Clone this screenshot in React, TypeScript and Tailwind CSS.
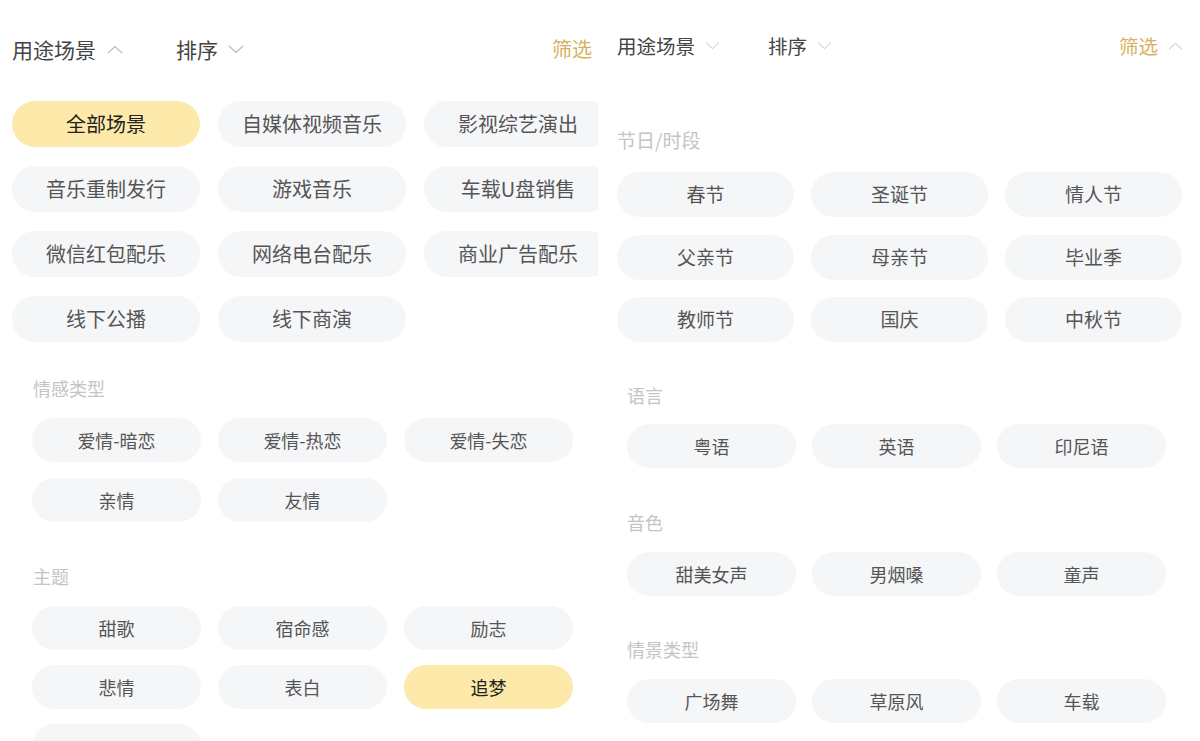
import React from "react";

const font = { fontFamily: '"Noto Sans CJK SC", "Noto Sans", sans-serif' };

function Chevron({ up, className }: { up?: boolean; className?: string }) {
  return (
    <svg viewBox="0 0 16 9" className={className} fill="none" stroke="currentColor" strokeWidth="1.1" strokeLinecap="round" strokeLinejoin="round">
      {up ? <polyline points="1,8 8,1.5 15,8" /> : <polyline points="1,1 8,7.5 15,1" />}
    </svg>
  );
}

function Chip({ label, active, cls }: { label: string; active?: boolean; cls: string }) {
  return (
    <div
      className={`flex items-center justify-center rounded-full whitespace-nowrap ${cls} ${
        active ? "bg-[#fde9a9] text-[#222]" : "bg-[#f5f6f8] text-[#555]"
      }`}
    >
      {label}
    </div>
  );
}

function Label({ text, cls }: { text: string; cls: string }) {
  return <div className={`text-[#c4c4c4] leading-[24px] ${cls}`}>{text}</div>;
}

export default function App() {
  const top = ["全部场景", "自媒体视频音乐", "影视综艺演出", "音乐重制发行", "游戏音乐", "车载U盘销售", "微信红包配乐", "网络电台配乐", "商业广告配乐", "线下公播", "线下商演"];
  const emo = ["爱情-暗恋", "爱情-热恋", "爱情-失恋", "亲情", "友情"];
  const theme = ["甜歌", "宿命感", "励志", "悲情", "表白", "追梦", ""];
  const fest = ["春节", "圣诞节", "情人节", "父亲节", "母亲节", "毕业季", "教师节", "国庆", "中秋节"];
  const lang = ["粤语", "英语", "印尼语"];
  const tone = ["甜美女声", "男烟嗓", "童声"];
  const scene = ["广场舞", "草原风", "车载"];

  return (
    <div className="w-[1200px] h-[741px] overflow-hidden bg-white flex" style={font}>
      {/* Left panel */}
      <div className="w-[598px] h-full overflow-hidden shrink-0 flex flex-col">
        <div className="pt-[36px] pl-[12px] pr-[6px] flex items-center text-[21px] leading-[26px] text-[#444]">
          <div className="flex items-center w-[164px]">
            <span>用途场景</span>
            <Chevron up className="w-[16px] h-[9px] ml-[11px] text-[#bdbdbd]" />
          </div>
          <div className="flex items-center">
            <span>排序</span>
            <Chevron className="w-[16px] h-[9px] ml-[10px] text-[#bdbdbd]" />
          </div>
          <span className="ml-auto text-[#d6b25e] text-[20px]">筛选</span>
        </div>
        <div className="mt-[39px] pl-[12px] grid grid-cols-[188px_188px_188px] gap-x-[18px] gap-y-[19px] w-[620px]">
          {top.map((t, i) => (
            <Chip key={t} label={t} active={i === 0} cls="h-[46px] text-[20px]" />
          ))}
        </div>
        <Label text="情感类型" cls="mt-[34px] pl-[33px] text-[18px]" />
        <div className="mt-[18px] pl-[32px] grid grid-cols-[169px_169px_169px] gap-x-[17px] gap-y-[16px]">
          {emo.map((t) => (
            <Chip key={t} label={t} cls="h-[44px] text-[18px]" />
          ))}
        </div>
        <Label text="主题" cls="mt-[42px] pl-[33px] text-[18px]" />
        <div className="mt-[18px] pl-[32px] grid grid-cols-[169px_169px_169px] gap-x-[17px] gap-y-[15px]">
          {theme.map((t, i) => (
            <Chip key={i} label={t} active={t === "追梦"} cls="h-[44px] text-[18px]" />
          ))}
        </div>
      </div>

      {/* Right panel */}
      <div className="flex-1 h-full overflow-hidden flex flex-col">
        <div className="pt-[33px] pl-[19px] pr-[17px] flex items-center text-[19.5px] leading-[26px] text-[#444]">
          <div className="flex items-center w-[151px]">
            <span>用途场景</span>
            <Chevron className="w-[15px] h-[8px] ml-[10px] text-[#bdbdbd]" />
          </div>
          <div className="flex items-center">
            <span>排序</span>
            <Chevron className="w-[15px] h-[8px] ml-[10px] text-[#bdbdbd]" />
          </div>
          <div className="ml-auto flex items-center">
            <span className="text-[#d6b25e]">筛选</span>
            <Chevron up className="w-[15px] h-[8px] ml-[10px] text-[#bdbdbd]" />
          </div>
        </div>
        <Label text="节日/时段" cls="mt-[69px] pl-[19px] text-[19px]" />
        <div className="mt-[20px] pl-[19px] grid grid-cols-[177px_177px_177px] gap-x-[17px] gap-y-[17.5px]">
          {fest.map((t) => (
            <Chip key={t} label={t} cls="h-[45px] text-[19px]" />
          ))}
        </div>
        <Label text="语言" cls="mt-[41px] pl-[29px] text-[18px]" />
        <div className="mt-[17px] pl-[29px] grid grid-cols-[169px_169px_169px] gap-x-[16px]">
          {lang.map((t) => (
            <Chip key={t} label={t} cls="h-[44px] text-[18px]" />
          ))}
        </div>
        <Label text="音色" cls="mt-[42px] pl-[29px] text-[18px]" />
        <div className="mt-[18px] pl-[29px] grid grid-cols-[169px_169px_169px] gap-x-[16px]">
          {tone.map((t) => (
            <Chip key={t} label={t} cls="h-[44px] text-[18px]" />
          ))}
        </div>
        <Label text="情景类型" cls="mt-[41px] pl-[29px] text-[18px]" />
        <div className="mt-[18px] pl-[29px] grid grid-cols-[169px_169px_169px] gap-x-[16px]">
          {scene.map((t) => (
            <Chip key={t} label={t} cls="h-[44px] text-[18px]" />
          ))}
        </div>
      </div>
    </div>
  );
}
